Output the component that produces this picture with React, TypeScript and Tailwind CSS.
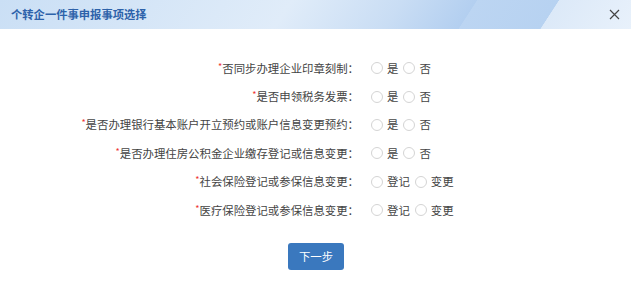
import React from "react";

type Row = { label: string; options: [string, string] };

const rows: Row[] = [
  { label: "否同步办理企业印章刻制", options: ["是", "否"] },
  { label: "是否申领税务发票", options: ["是", "否"] },
  { label: "是否办理银行基本账户开立预约或账户信息变更预约", options: ["是", "否"] },
  { label: "是否办理住房公积金企业缴存登记或信息变更", options: ["是", "否"] },
  { label: "社会保险登记或参保信息变更", options: ["登记", "变更"] },
  { label: "医疗保险登记或参保信息变更", options: ["登记", "变更"] },
];

function Radio({ text }: { text: string }) {
  return (
    <label className="flex items-center gap-[4px] mr-[5px]">
      <span className="w-[12px] h-[12px] rounded-full border border-[#d4d4d4] bg-white" />
      <span className="text-[11.4px] text-[#444]">{text}</span>
    </label>
  );
}

export default function App() {
  return (
    <div
      className="w-[631px] h-[303px] bg-white overflow-hidden"
      style={{ fontFamily: '"Noto Sans CJK SC", "Noto Sans", sans-serif' }}
    >
      <div className="relative h-[29px] flex items-center justify-between px-[11px] bg-[linear-gradient(123deg,#cadff5_0%,#e0ecf9_45%,#c9ddf4_62%,#b3cff0_73.4%,#bcd5f2_73.5%,#b7d2f1_86%,#dce9f8_86.1%,#e8f1fb_100%)]">
        <span className="text-[11.3px] font-bold text-[#2d62aa]">
          个转企一件事申报事项选择
        </span>
        <svg width="11" height="11" viewBox="0 0 11 11">
          <path d="M1 1L10 10M10 1L1 10" stroke="#444" strokeWidth="1.2" />
        </svg>
      </div>
      <div className="pt-[25px] flex flex-col">
        {rows.map((r, i) => (
          <div key={i} className="h-[28.4px] flex items-center">
            <div className="w-[362px] text-right text-[11.4px] text-[#444] pr-[3px]">
              <span className="text-[#e33] text-[9px] align-top">*</span>
              {r.label}：
            </div>
            <div className="flex items-center pl-[9px]">
              <Radio text={r.options[0]} />
              <Radio text={r.options[1]} />
            </div>
          </div>
        ))}
        <div className="flex justify-center mt-[19px] pl-[1px]">
          <button className="w-[56px] h-[27px] rounded-[3px] bg-[#3a78be] text-white text-[11.4px]">
            下一步
          </button>
        </div>
      </div>
    </div>
  );
}
